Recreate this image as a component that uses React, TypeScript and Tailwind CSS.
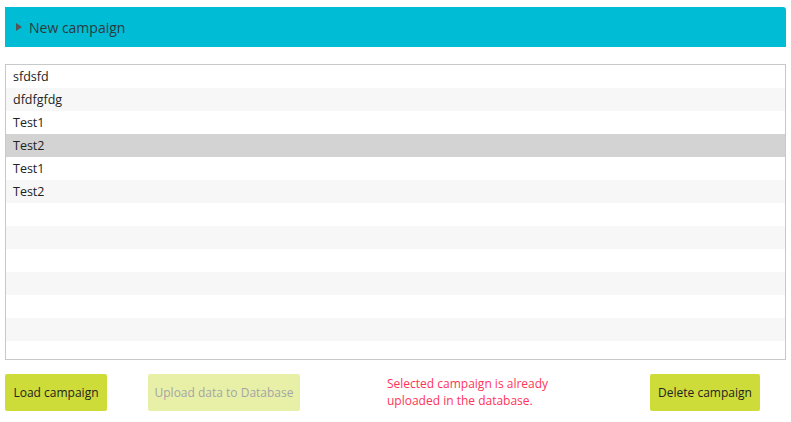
const ROWS = ["sfdsfd", "dfdfgfdg", "Test1", "Test2", "Test1", "Test2", "", "", "", "", "", "", ""];
const SELECTED = 3;

export default function App() {
  return (
    <div className="w-[791px] h-[422px] bg-white px-[5px] pt-[7px] text-[#333]" style={{ fontFamily: '"Open Sans", "Noto Sans", sans-serif' }}>
      {/* Header */}
      <div className="h-10 bg-[#00bcd4] rounded-tr-[3px] flex items-center pl-[11px] gap-[7px]">
        <svg width="6" height="8" viewBox="0 0 6 8">
          <path d="M0 0 L6 4 L0 8 Z" fill="#555" />
        </svg>
        <span className="text-[14px] text-[#2b3a3c]">New campaign</span>
      </div>

      {/* List */}
      <div className="mt-[17px] h-[296px] border border-[#c8c8c8] overflow-hidden">
        {ROWS.map((r, i) => (
          <div
            key={i}
            className={
              "h-[23px] flex items-center pl-[7px] pt-[2px] text-[12.5px] text-[#222] " +
              (i === SELECTED ? "bg-[#d3d3d3]" : i % 2 === 1 ? "bg-[#f7f7f7]" : "bg-white")
            }
          >
            {r}
          </div>
        ))}
      </div>

      {/* Actions */}
      <div className="mt-[14px] flex items-start">
        <button className="w-[102px] h-[37px] rounded-[2px] bg-[#cddc39] text-[12px] text-[#222]">Load campaign</button>
        <button className="ml-[41px] w-[152px] h-[37px] rounded-[2px] bg-[#e8f0a8] text-[12px] text-[#a5a5a5]">Upload data to Database</button>
        <div className="ml-[87px] mt-[1px] w-[165px] text-[12px] leading-[17px] text-[#ff3358]">
          Selected campaign is already uploaded in the database.
        </div>
        <button className="ml-[98px] w-[110px] h-[37px] rounded-[2px] bg-[#cddc39] text-[12px] text-[#222]">Delete campaign</button>
      </div>
    </div>
  );
}
